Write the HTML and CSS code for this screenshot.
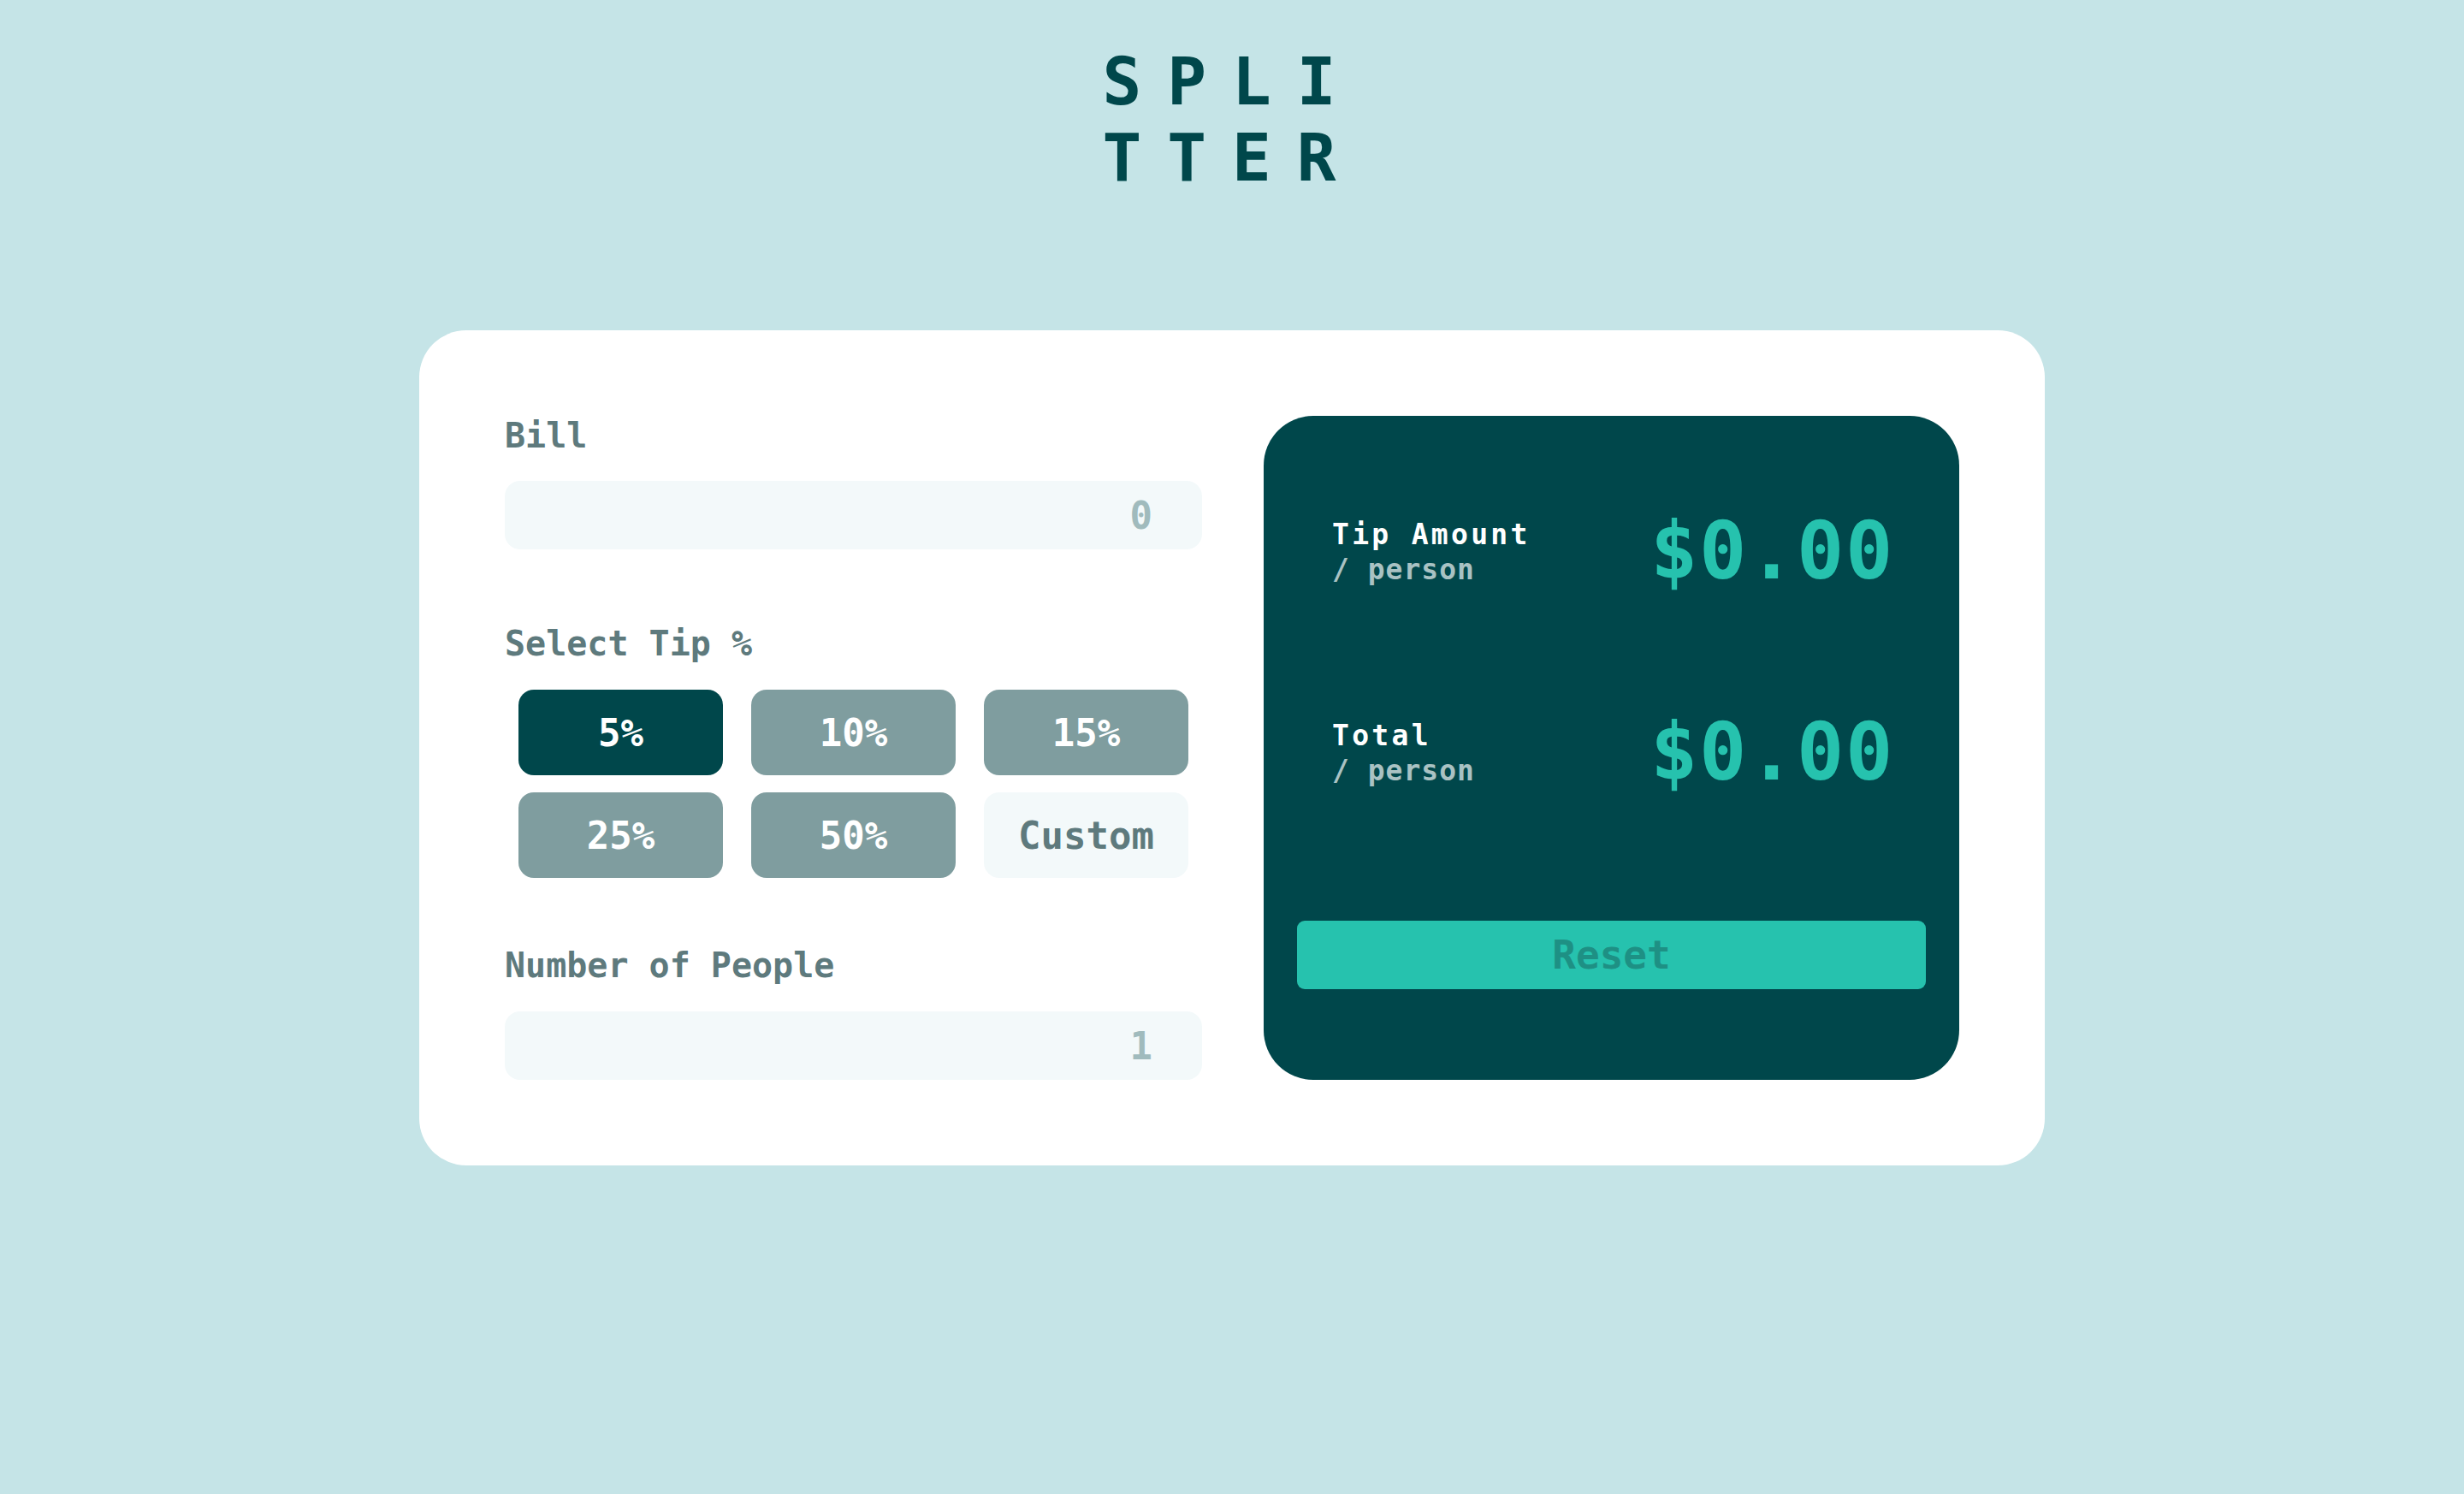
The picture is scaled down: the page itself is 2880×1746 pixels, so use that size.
FILE: index.html
```html
<!DOCTYPE html>
<html lang="en">
<head>
<meta charset="utf-8">
<title>Splitter</title>
<link rel="stylesheet" href="styles.css">
</head>
<body>
<main class="page">
  <h1 class="logo">SPLI<br>TTER</h1>
  <section class="calculator">
    <div class="inputs">
      <label class="label" for="bill">Bill</label>
      <input class="field" id="bill" type="text" placeholder="0">
      <p class="label label-tip">Select Tip %</p>
      <div class="tips">
        <button class="tip tip-active">5%</button>
        <button class="tip">10%</button>
        <button class="tip">15%</button>
        <button class="tip">25%</button>
        <button class="tip">50%</button>
        <button class="tip tip-custom">Custom</button>
      </div>
      <label class="label label-people" for="people">Number of People</label>
      <input class="field field-people" id="people" type="text" placeholder="1">
    </div>
    <div class="results">
      <div class="rows">
        <div class="row">
          <div class="row-text">
            <p class="row-title">Tip Amount</p>
            <p class="row-sub">/ person</p>
          </div>
          <p class="amount">$0.00</p>
        </div>
        <div class="row row-total">
          <div class="row-text">
            <p class="row-title">Total</p>
            <p class="row-sub">/ person</p>
          </div>
          <p class="amount">$0.00</p>
        </div>
      </div>
      <button class="reset">Reset</button>
    </div>
  </section>
</main>
</body>
</html>
```
FILE: styles.css
```css
* {
  box-sizing: border-box;
}

html, body {
  margin: 0;
  padding: 0;
}

body {
  background: #c5e4e7;
  font-family: "DejaVu Sans Mono", "Liberation Mono", monospace;
  font-weight: bold;
  min-height: 1746px;
}

p {
  margin: 0;
}

.page {
  padding-top: 51px;
}

.logo {
  margin: 0;
  text-align: center;
  font-size: 76px;
  line-height: 89px;
  letter-spacing: 30px;
  color: #00474b;
  font-weight: bold;
}

.calculator {
  width: 1900px;
  margin: 157px auto 0;
  padding: 100px;
  background: #ffffff;
  border-radius: 55px;
  display: grid;
  grid-template-columns: 815px 813px;
  column-gap: 72px;
}

.inputs {
  display: flex;
  flex-direction: column;
}

.label {
  display: block;
  font-size: 40px;
  line-height: 46px;
  color: #5e7a7d;
  margin-bottom: 30px;
}

.label-tip {
  margin-top: 87px;
  margin-bottom: 31px;
}

.label-people {
  margin-top: 79px;
  margin-bottom: 31px;
}

.field {
  display: block;
  width: 100%;
  height: 80px;
  border: none;
  outline: none;
  border-radius: 18px;
  background: #f3f9fa;
  padding: 0 58px 0 20px;
  text-align: right;
  font-family: inherit;
  font-weight: bold;
  font-size: 44px;
  color: #00474b;
}

.field::placeholder {
  color: #a0bbbd;
  opacity: 1;
}

.tips {
  margin: 0 16px;
  display: grid;
  grid-template-columns: repeat(3, 239px);
  grid-auto-rows: 100px;
  gap: 20px 33px;
}

.tip {
  border: none;
  border-radius: 18px;
  background: #7f9d9f;
  color: #ffffff;
  font-family: inherit;
  font-weight: bold;
  font-size: 44px;
  padding: 0;
}

.tip-active {
  background: #00474b;
}

.tip-custom {
  background: #f3f9fa;
  color: #5e7a7d;
}

.results {
  background: #00474b;
  border-radius: 58px;
  padding: 113px 39px 106px;
  display: flex;
  flex-direction: column;
}

.rows {
  padding: 0 37px 0 41px;
}

.row {
  height: 92px;
  display: flex;
  justify-content: space-between;
  align-items: center;
}

.row-total {
  margin-top: 143px;
}

.row-title {
  font-size: 33px;
  line-height: 42px;
  letter-spacing: 3.3px;
  color: #ffffff;
}

.row-sub {
  font-size: 33px;
  line-height: 40px;
  letter-spacing: 1px;
  color: #a9c2c3;
}

.amount {
  font-size: 92px;
  line-height: 92px;
  letter-spacing: 1.6px;
  color: #26c2ae;
}

.reset {
  margin-top: 150px;
  height: 80px;
  border: none;
  border-radius: 9px;
  background: #26c2ae;
  color: #1e9084;
  font-family: inherit;
  font-weight: bold;
  font-size: 46px;
  padding: 0;
}
```
